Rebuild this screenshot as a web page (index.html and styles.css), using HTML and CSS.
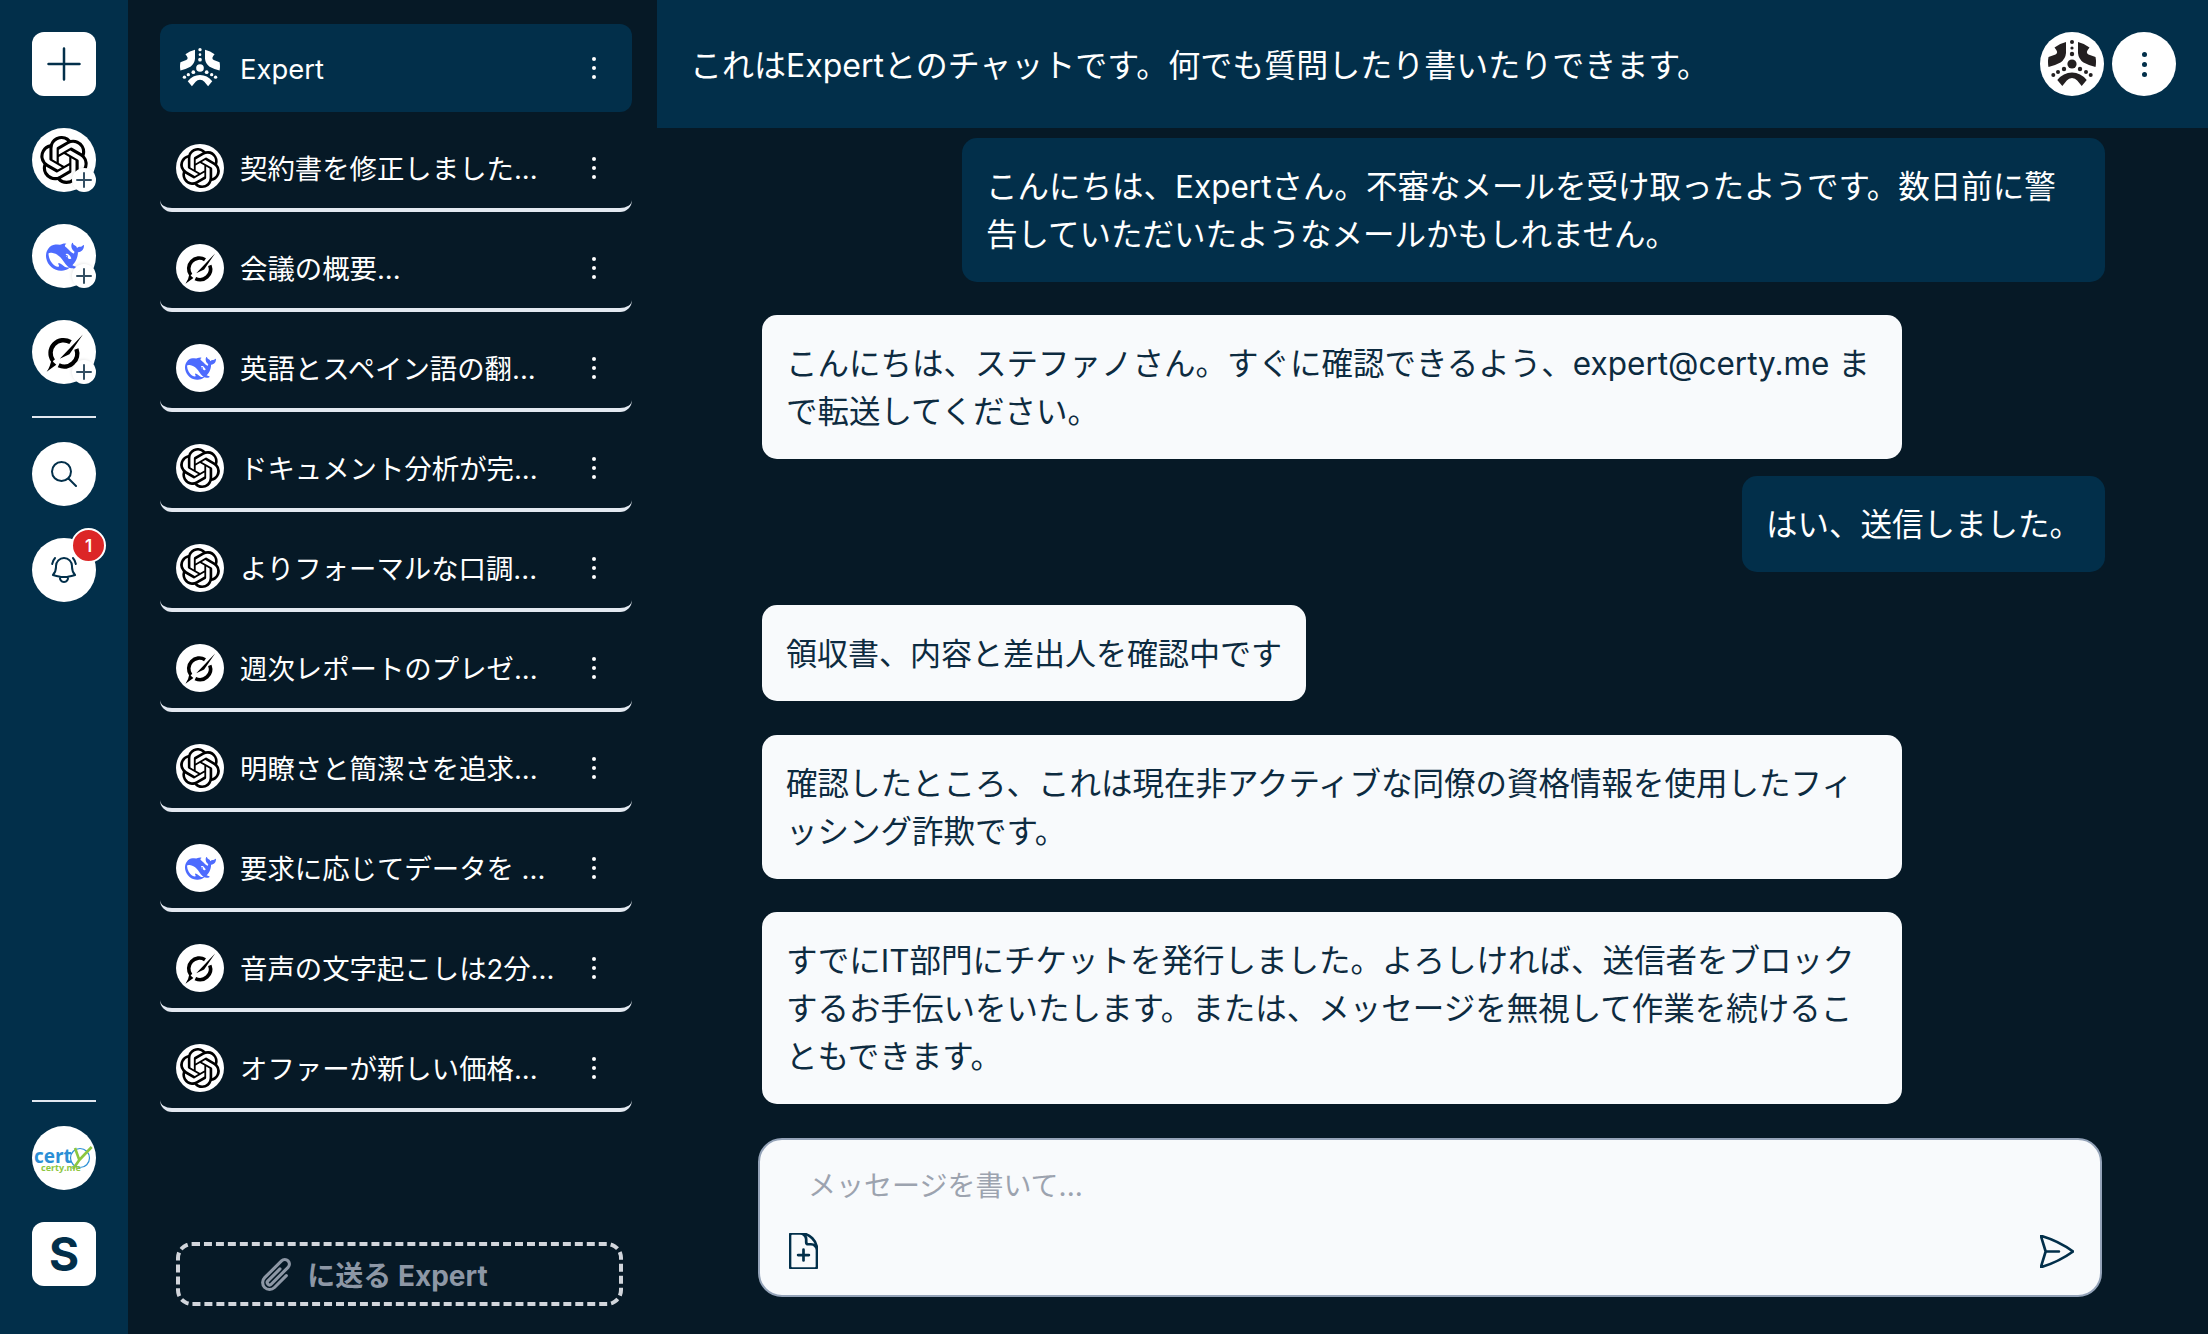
FILE: index.html
```html
<!DOCTYPE html>
<html lang="ja">
<head>
    <meta charset="UTF-8">
    <meta name="viewport" content="width=device-width, initial-scale=1.0">
    <title>Expert</title>
    <link rel="stylesheet" href="styles.css">
</head>
<body>
    <svg class="defs" aria-hidden="true">
        <symbol id="logo-openai" viewBox="0 0 24 24">
            <path fill="currentColor" d="M22.2819 9.8211a5.9847 5.9847 0 0 0-.5157-4.9108 6.0462 6.0462 0 0 0-6.5098-2.9A6.0651 6.0651 0 0 0 4.9807 4.1818a5.9847 5.9847 0 0 0-3.9977 2.9 6.0462 6.0462 0 0 0 .7427 7.0966 5.98 5.98 0 0 0 .511 4.9107 6.051 6.051 0 0 0 6.5146 2.9001A5.9847 5.9847 0 0 0 13.2599 24a6.0557 6.0557 0 0 0 5.7718-4.2058 5.9894 5.9894 0 0 0 3.9977-2.9001 6.0557 6.0557 0 0 0-.7475-7.0729zm-9.022 12.6081a4.4755 4.4755 0 0 1-2.8764-1.0408l.1419-.0804 4.7783-2.7582a.7948.7948 0 0 0 .3927-.6813v-6.7369l2.02 1.1686a.071.071 0 0 1 .038.052v5.5826a4.504 4.504 0 0 1-4.4945 4.4944zm-9.6607-4.1254a4.4708 4.4708 0 0 1-.5346-3.0137l.142.0852 4.783 2.7582a.7712.7712 0 0 0 .7806 0l5.8428-3.3685v2.3324a.0804.0804 0 0 1-.0332.0615L9.74 19.9502a4.4992 4.4992 0 0 1-6.1408-1.6464zM2.3408 7.8956a4.485 4.485 0 0 1 2.3655-1.9728V11.6a.7664.7664 0 0 0 .3879.6765l5.8144 3.3543-2.0201 1.1685a.0757.0757 0 0 1-.071 0l-4.8303-2.7865A4.504 4.504 0 0 1 2.3408 7.872zm16.5963 3.8558L13.1038 8.364 15.1192 7.2a.0757.0757 0 0 1 .071 0l4.8303 2.7913a4.4944 4.4944 0 0 1-.6765 8.1042v-5.6772a.79.79 0 0 0-.407-.667zm2.0107-3.0231l-.142-.0852-4.7735-2.7818a.7759.7759 0 0 0-.7854 0L9.409 9.2297V6.8974a.0662.0662 0 0 1 .0284-.0615l4.8303-2.7866a4.4992 4.4992 0 0 1 6.6802 4.66zM8.3065 12.863l-2.02-1.1638a.0804.0804 0 0 1-.038-.0567V6.0742a4.4992 4.4992 0 0 1 7.3757-3.4537l-.142.0805L8.704 5.459a.7948.7948 0 0 0-.3927.6813zm1.0976-2.3654l2.602-1.4998 2.6069 1.4998v2.9994l-2.5974 1.4997-2.6067-1.4997Z"/>
        </symbol>
        <symbol id="logo-deepseek" viewBox="0 0 24 24">
            <path fill="#4d6bfe" d="M23.748 4.482c-.254-.124-.364.113-.512.234-.051.039-.094.09-.137.136-.372.397-.806.657-1.373.626-.829-.046-1.537.214-2.163.848-.133-.782-.575-1.248-1.247-1.548-.352-.156-.708-.311-.955-.65-.172-.241-.219-.51-.305-.774-.055-.16-.11-.323-.293-.35-.2-.031-.278.136-.356.276-.313.572-.434 1.202-.422 1.84.027 1.436.633 2.58 1.838 3.393.137.093.172.187.129.323-.082.28-.18.552-.266.833-.055.179-.137.217-.329.14a5.526 5.526 0 01-1.736-1.18c-.857-.828-1.631-1.742-2.597-2.458a11.365 11.365 0 00-.689-.471c-.985-.957.13-1.743.388-1.836.27-.098.093-.432-.779-.428-.872.004-1.67.295-2.687.684a3.055 3.055 0 01-.465.137 9.597 9.597 0 00-2.883-.102c-1.885.21-3.39 1.102-4.497 2.623C.082 8.606-.231 10.684.152 12.85c.403 2.284 1.569 4.175 3.36 5.653 1.858 1.533 3.997 2.284 6.438 2.14 1.482-.085 3.133-.284 4.994-1.86.47.234.962.327 1.78.397.63.059 1.236-.03 1.705-.128.735-.156.684-.837.419-.961-2.155-1.004-1.682-.595-2.113-.926 1.096-1.296 2.746-2.642 3.392-7.003.05-.347.007-.565 0-.845-.004-.17.035-.237.23-.256a4.173 4.173 0 001.545-.475c1.396-.763 1.96-2.015 2.093-3.517.02-.23-.004-.467-.247-.588zM11.581 18c-2.089-1.642-3.102-2.183-3.52-2.16-.392.024-.321.471-.235.763.09.288.207.486.371.739.114.167.192.416-.113.603-.673.416-1.842-.14-1.897-.167-1.361-.802-2.5-1.86-3.301-3.307-.774-1.393-1.224-2.887-1.298-4.482-.02-.386.093-.522.477-.592a4.696 4.696 0 011.529-.039c2.132.312 3.946 1.265 5.468 2.774.868.86 1.525 1.887 2.202 2.891.72 1.066 1.494 2.082 2.48 2.914.348.292.625.514.891.677-.802.09-2.14.11-3.054-.614zm1-6.44a.306.306 0 01.415-.287.302.302 0 01.2.288.306.306 0 01-.31.307.303.303 0 01-.304-.308zm3.11 1.596c-.2.081-.399.151-.59.16a1.245 1.245 0 01-.798-.254c-.274-.23-.47-.358-.552-.758a1.73 1.73 0 01.016-.588c.07-.327-.008-.537-.239-.727-.187-.156-.426-.199-.688-.199a.559.559 0 01-.254-.078c-.11-.054-.2-.19-.114-.358.028-.054.16-.186.192-.21.356-.202.767-.136 1.146.016.352.144.618.408 1.001.782.391.451.462.576.685.914.176.265.336.537.445.848.067.195-.019.354-.25.452z"/>
        </symbol>
        <symbol id="logo-grok" viewBox="0 0 24 24">
            <path fill="none" stroke="#000" stroke-width="2.800" d="M15.500 5.200A8.200 8.200 0 0 0 4.500 17M19.200 9.500A8.200 8.200 0 0 1 8 19.800"/>
            <path fill="#000" d="M23.300.3L14.800 12.800 8.700 15.600zM3.600 15.400q.8 2.800 2.900 4L.4 23.900q2.300-3.200 3.200-8.500z"/>
        </symbol>
        <symbol id="logo-expert" viewBox="8 8 48 48">
            <g fill="currentColor">
                <circle cx="32" cy="32" r="4.6"/>
                <circle cx="32" cy="10" r="2"/>
                <circle cx="32" cy="16" r="1.6"/>
                <circle cx="32" cy="22" r="2.2"/>
                <circle cx="24" cy="37" r="2.2"/>
                <circle cx="18" cy="40" r="2"/>
                <circle cx="13.3" cy="43" r="2"/>
                <circle cx="40" cy="37" r="2.2"/>
                <circle cx="46" cy="40" r="2"/>
                <circle cx="50.7" cy="43" r="2"/>
                <path d="M26 10v11q-.5 6-5.500 9.500q-5.500 3-12 4.500q-1-5 0-10l7-2.500q2-1 1.500-3q-.5-1.500-2.500-4q5-4 11.500-5.500z"/>
                <path d="M38 10v11q.5 6 5.500 9.500q5.500 3 12 4.500q1-5 0-10l-7-2.500q-2-1-1.500-3q.5-1.500 2.500-4q-5-4-11.500-5.500z"/>
                <path d="M17.300 48q6-7.500 14.700-7.500t14.700 7.500l-5 6l-4.500-5.500q-2-2.500-5.200-2.500t-5.200 2.500l-4.500 5.500z"/>
            </g>
        </symbol>
    </svg>

    <nav class="rail">
        <button class="rail-btn square">
            <svg class="ico-new" viewBox="0 0 34 34"><path d="M17 1.500v31M1.500 17h31"/></svg>
        </button>
        <div class="rail-btn round">
            <svg class="rail-logo openai"><use href="#logo-openai"/></svg>
            <span class="add"><svg viewBox="0 0 16 16"><path d="M8 1v14M1 8h14"/></svg></span>
        </div>
        <div class="rail-btn round">
            <svg class="rail-logo mark"><use href="#logo-deepseek"/></svg>
            <span class="add"><svg viewBox="0 0 16 16"><path d="M8 1v14M1 8h14"/></svg></span>
        </div>
        <div class="rail-btn round">
            <svg class="rail-logo mark"><use href="#logo-grok"/></svg>
            <span class="add"><svg viewBox="0 0 16 16"><path d="M8 1v14M1 8h14"/></svg></span>
        </div>
        <div class="rail-line"></div>
        <div class="rail-btn round">
            <svg class="ico-line" width="26" height="26" viewBox="0 0 26 26"><circle cx="10.500" cy="10.500" r="9.500"/><path d="M17.500 17.500L25 25"/></svg>
        </div>
        <div class="rail-btn round">
            <svg class="ico-line thin" width="32" height="32" viewBox="0 0 24 24"><path d="M14.857 17.082a23.848 23.848 0 005.454-1.31A8.967 8.967 0 0118 9.750v-.7V9A6 6 0 006 9v.750a8.967 8.967 0 01-2.312 6.022c1.733.64 3.56 1.085 5.455 1.31m5.714 0a24.255 24.255 0 01-5.714 0m5.714 0a3 3 0 11-5.714 0M3.124 7.500A8.969 8.969 0 015.292 3m13.416 0a8.969 8.969 0 012.168 4.500"/></svg>
            <span class="badge">1</span>
        </div>
        <div class="rail-line bottom"></div>
        <div class="rail-btn round">
            <div class="cert-logo">
                <span class="cert-word">cert</span>
                <svg class="cert-check" viewBox="0 0 26 26"><circle class="ring" cx="12" cy="14" r="9.500"/><path class="tick" d="M7 4l4.300 12L5 25M11.300 16L23.700 3"/></svg>
                <span class="cert-sub">certy.me</span>
            </div>
        </div>
        <div class="rail-btn square user">S</div>
    </nav>

    <aside class="chats">
        <div class="chat-row active">
            <svg class="logo-expert"><use href="#logo-expert"/></svg>
            <span class="chat-name">Expert</span>
            <span class="kebab"><i></i><i></i><i></i></span>
        </div>
        <div class="chat-row">
            <span class="chat-ava"><svg class="openai"><use href="#logo-openai"/></svg></span>
            <span class="chat-name">契約書を修正しました...</span>
            <span class="kebab"><i></i><i></i><i></i></span>
        </div>
        <div class="chat-row">
            <span class="chat-ava"><svg class="mark"><use href="#logo-grok"/></svg></span>
            <span class="chat-name">会議の概要...</span>
            <span class="kebab"><i></i><i></i><i></i></span>
        </div>
        <div class="chat-row">
            <span class="chat-ava"><svg class="mark"><use href="#logo-deepseek"/></svg></span>
            <span class="chat-name">英語とスペイン語の翻...</span>
            <span class="kebab"><i></i><i></i><i></i></span>
        </div>
        <div class="chat-row">
            <span class="chat-ava"><svg class="openai"><use href="#logo-openai"/></svg></span>
            <span class="chat-name">ドキュメント分析が完...</span>
            <span class="kebab"><i></i><i></i><i></i></span>
        </div>
        <div class="chat-row">
            <span class="chat-ava"><svg class="openai"><use href="#logo-openai"/></svg></span>
            <span class="chat-name">よりフォーマルな口調...</span>
            <span class="kebab"><i></i><i></i><i></i></span>
        </div>
        <div class="chat-row">
            <span class="chat-ava"><svg class="mark"><use href="#logo-grok"/></svg></span>
            <span class="chat-name">週次レポートのプレゼ...</span>
            <span class="kebab"><i></i><i></i><i></i></span>
        </div>
        <div class="chat-row">
            <span class="chat-ava"><svg class="openai"><use href="#logo-openai"/></svg></span>
            <span class="chat-name">明瞭さと簡潔さを追求...</span>
            <span class="kebab"><i></i><i></i><i></i></span>
        </div>
        <div class="chat-row">
            <span class="chat-ava"><svg class="mark"><use href="#logo-deepseek"/></svg></span>
            <span class="chat-name">要求に応じてデータを ...</span>
            <span class="kebab"><i></i><i></i><i></i></span>
        </div>
        <div class="chat-row">
            <span class="chat-ava"><svg class="mark"><use href="#logo-grok"/></svg></span>
            <span class="chat-name">音声の文字起こしは2分...</span>
            <span class="kebab"><i></i><i></i><i></i></span>
        </div>
        <div class="chat-row">
            <span class="chat-ava"><svg class="openai"><use href="#logo-openai"/></svg></span>
            <span class="chat-name">オファーが新しい価格...</span>
            <span class="kebab"><i></i><i></i><i></i></span>
        </div>
        <div class="send-to">
            <svg class="ico-clip" width="37" height="37" viewBox="0 0 24 24"><path d="M18.375 12.739l-7.693 7.693a4.500 4.500 0 01-6.364-6.364l10.940-10.940A3 3 0 1119.500 7.372L8.552 18.320m.009-.01l-.01.01m5.699-9.941l-7.810 7.810a1.500 1.500 0 002.112 2.130"/></svg>
            <span>に送る Expert</span>
        </div>
    </aside>

    <main class="main">
        <header class="topbar">
            <h1 class="topbar-title">これはExpertとのチャットです。何でも質問したり書いたりできます。</h1>
            <div class="topbar-ava"><svg><use href="#logo-expert"/></svg></div>
            <div class="topbar-more"><span class="kebab big"><i></i><i></i><i></i></span></div>
        </header>
        <section class="messages">
            <div class="msg me">こんにちは、Expertさん。不審なメールを受け取ったようです。数日前に警告していただいたようなメールかもしれません。</div>
            <div class="msg bot">こんにちは、ステファノさん。すぐに確認できるよう、expert@certy.me まで転送してください。</div>
            <div class="msg me near">はい、送信しました。</div>
            <div class="msg bot short">領収書、内容と差出人を確認中です</div>
            <div class="msg bot">確認したところ、これは現在非アクティブな同僚の資格情報を使用したフィッシング詐欺です。</div>
            <div class="msg bot">すでにIT部門にチケットを発行しました。よろしければ、送信者をブロックするお手伝いをいたします。または、メッセージを無視して作業を続けることもできます。</div>
        </section>
        <div class="composer">
            <div class="placeholder">メッセージを書いて...</div>
            <div class="composer-tools">
                <svg class="ico-file" viewBox="4 2 16 20"><path d="M19.500 14.250v-2.625a3.375 3.375 0 00-3.375-3.375h-1.500A1.125 1.125 0 0113.500 7.125v-1.500a3.375 3.375 0 00-3.375-3.375H8.250m3.750 9v6m3-3H9m1.500-12H5.625c-.621 0-1.125.504-1.125 1.125v17.250c0 .621.504 1.125 1.125 1.125h12.750c.621 0 1.125-.504 1.125-1.125V11.250a9 9 0 00-9-9z"/></svg>
                <svg class="ico-send" viewBox="2.800 2.700 19.200 18.600"><path d="M6 12L3.269 3.126A59.768 59.768 0 0121.485 12 59.770 59.770 0 013.270 20.876L5.999 12zm0 0h7.500"/></svg>
            </div>
        </div>
    </main>
</body>
</html>
```

FILE: styles.css
```css
* {
    box-sizing: border-box;
}
html {
    height: 1334px;
    overflow: hidden;
}
body {
    margin: 0;
    display: flex;
    height: 1334px;
    overflow: hidden;
    background: #061926;
    color: #fff;
    font-family: Inter, "Noto Sans CJK JP", sans-serif;
}
.defs {
    width: 0;
    height: 0;
    position: absolute;
}

/* left rail */
.rail {
    width: 128px;
    flex: none;
    display: flex;
    flex-direction: column;
    align-items: center;
    padding-top: 32px;
    background: #022f4a;
}
.rail-btn {
    position: relative;
    width: 64px;
    height: 64px;
    flex: none;
    display: flex;
    align-items: center;
    justify-content: center;
    background: #fff;
    border: 0;
    padding: 0;
    margin-bottom: 32px;
    color: #000;
}
.square {
    border-radius: 12px;
}
.round {
    border-radius: 50%;
}
.ico-new {
    width: 34px;
    height: 34px;
    fill: none;
    stroke: #022f4a;
    stroke-width: 2.5;
    stroke-linecap: round;
}
.rail-logo.openai {
    width: 48px;
    height: 48px;
    margin: -1px 0 0 0;
}
.rail-logo.mark {
    width: 38px;
    height: 38px;
    margin: 1px 0 0 2px;
}
.add {
    position: absolute;
    right: 0;
    bottom: 0;
    width: 24px;
    height: 24px;
    display: flex;
    align-items: center;
    justify-content: center;
    background: #fff;
    border-radius: 50%;
    box-shadow: -1px -1px 3px rgba(0, 0, 0, 0.08);
}
.add svg {
    width: 16px;
    height: 16px;
    fill: none;
    stroke: #334e62;
    stroke-width: 2;
    stroke-linecap: round;
}
.rail-line {
    width: 64px;
    height: 2px;
    flex: none;
    margin: 0 0 24px;
    background: #e2e8f0;
}
.rail-line.bottom {
    margin-top: auto;
}
.ico-line {
    fill: none;
    stroke: #022f4a;
    stroke-width: 2;
    stroke-linecap: round;
    stroke-linejoin: round;
}
.ico-line.thin {
    stroke-width: 1.5;
}
.badge {
    position: absolute;
    left: 39px;
    top: -10px;
    width: 35px;
    height: 35px;
    display: flex;
    align-items: center;
    justify-content: center;
    background: #dc2626;
    border: 2px solid #fff;
    border-radius: 50%;
    color: #fff;
    font-size: 17px;
    font-weight: 600;
}
.cert-logo {
    position: relative;
    width: 64px;
    height: 64px;
}
.cert-word {
    position: absolute;
    left: 2px;
    top: 22px;
    color: #2b8fd6;
    font-size: 19px;
    font-weight: 700;
    line-height: 16px;
    font-family: "Open Sans", sans-serif;
}
.cert-sub {
    position: absolute;
    left: 9px;
    top: 38px;
    color: #8cc63f;
    font-size: 9px;
    font-weight: 700;
    line-height: 8px;
    font-family: "Open Sans", sans-serif;
}
.cert-check {
    position: absolute;
    left: 36px;
    top: 18px;
    width: 26px;
    height: 26px;
    fill: none;
}
.cert-check .ring {
    stroke: #2b8fd6;
    stroke-width: 1.2;
}
.cert-check .tick {
    stroke: #8cc63f;
    stroke-width: 2.6;
}
.user {
    margin-bottom: 48px;
    color: #022f4a;
    font-size: 46px;
    font-weight: 700;
}

/* chat list */
.chats {
    width: 529px;
    flex: none;
    display: flex;
    flex-direction: column;
    gap: 12px;
    padding: 24px 25px 28px 32px;
}
.chat-row {
    height: 88px;
    flex: none;
    display: flex;
    align-items: center;
    padding: 4px 16px 0;
    border-bottom: 4px solid #e2e8f0;
    border-radius: 12px;
}
.chat-row.active {
    padding: 0 16px 0 20px;
    background: #022f4a;
    border-bottom: 0;
}
.logo-expert {
    width: 40px;
    height: 40px;
    flex: none;
    color: #fff;
    margin-right: 20px;
}
.chat-ava {
    width: 48px;
    height: 48px;
    flex: none;
    display: flex;
    align-items: center;
    justify-content: center;
    margin-right: 16px;
    background: #fff;
    border-radius: 50%;
    color: #000;
}
.chat-ava .openai {
    width: 40px;
    height: 40px;
}
.chat-ava .mark {
    width: 31px;
    height: 31px;
}
.chat-name {
    flex: 1;
    padding-top: 2px;
    font-size: 27.4px;
    line-height: 36px;
    white-space: pre;
}
.kebab {
    width: 6px;
    flex: none;
    display: flex;
    flex-direction: column;
    gap: 5px;
    margin-right: 18px;
}
.kebab i {
    display: block;
    width: 4px;
    height: 4px;
    background: #fff;
    border-radius: 50%;
}
.kebab.big {
    gap: 5px;
    margin: 0;
    align-items: center;
}
.kebab.big i {
    width: 5px;
    height: 5px;
    background: #022f4a;
}
.send-to {
    height: 64px;
    flex: none;
    display: flex;
    align-items: center;
    justify-content: center;
    gap: 12px;
    margin: auto 9px 0 16px;
    padding-right: 53px;
    border: 4px dashed #d1d5db;
    border-radius: 16px;
    color: #8d97a5;
    font-size: 28px;
    font-weight: 700;
}
.ico-clip {
    fill: none;
    stroke: currentColor;
    stroke-width: 2;
    stroke-linecap: round;
    stroke-linejoin: round;
}

/* main column */
.main {
    flex: 1;
    min-width: 0;
    display: flex;
    flex-direction: column;
}
.topbar {
    height: 128px;
    flex: none;
    display: flex;
    align-items: center;
    gap: 8px;
    padding: 0 32px 0 33px;
    background: #022f4a;
}
.topbar-title {
    flex: 1;
    margin: 0;
    padding-bottom: 2px;
    font-size: 32px;
    font-weight: 400;
}
.topbar-ava,
.topbar-more {
    width: 64px;
    height: 64px;
    display: flex;
    align-items: center;
    justify-content: center;
    background: #fff;
    border-radius: 50%;
}
.topbar-ava svg {
    width: 48px;
    height: 48px;
    color: #231f20;
}
.messages {
    flex: 1;
    display: flex;
    flex-direction: column;
    align-items: flex-start;
    gap: 33px;
    padding: 10px 103px 0 105px;
}
.msg {
    max-width: 1140px;
    padding: 25px 24px 23px;
    border-radius: 15px;
    font-size: 31.5px;
    line-height: 48px;
    background: #f8fafc;
    color: #0d2b40;
}
.msg.me {
    max-width: 1143px;
    align-self: flex-end;
    background: #022f4a;
    color: #fff;
}
.msg.near {
    margin-top: -16px;
}
.msg.short {
    margin-bottom: 1px;
    font-size: 31px;
}
.composer {
    height: 159px;
    flex: none;
    display: flex;
    flex-direction: column;
    justify-content: space-between;
    margin: 0 106px 37px 101px;
    padding: 28px 26px 26px 29px;
    background: #f8fafc;
    border: 2px solid #94a3b8;
    border-radius: 24px;
}
.placeholder {
    padding-left: 19px;
    color: #9ca3af;
    font-size: 28px;
    line-height: 36px;
}
.composer-tools {
    display: flex;
    justify-content: space-between;
    align-items: center;
}
.ico-file,
.ico-send {
    fill: none;
    stroke: #022f4a;
    stroke-width: 1.5;
    stroke-linecap: round;
    stroke-linejoin: round;
}
.ico-file {
    width: 29px;
    height: 36px;
}
.ico-send {
    width: 34px;
    height: 33px;
}
```
